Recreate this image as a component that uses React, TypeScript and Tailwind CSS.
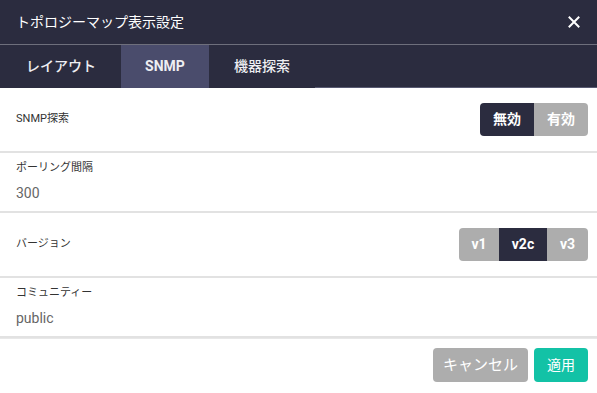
import { useState } from 'react';

const font = "font-['Roboto','Noto_Sans_CJK_JP',sans-serif]";

function Segmented({ items, value, onChange, widths }: { items: string[]; value: string; onChange: (v: string) => void; widths: string[] }) {
  return (
    <div className="flex h-[33px] overflow-hidden rounded-[4px]">
      {items.map((it, i) => (
        <button
          key={it}
          onClick={() => onChange(it)}
          className={`${widths[i]} flex items-center justify-center text-[14px] font-bold text-white ${
            value === it ? 'bg-[#2b2c3f]' : 'bg-[#adadad]'
          }`}
        >
          {it}
        </button>
      ))}
    </div>
  );
}

export default function App() {
  const [enabled, setEnabled] = useState('無効');
  const [version, setVersion] = useState('v2c');
  const tabs = ['レイアウト', 'SNMP', '機器探索'];

  return (
    <div className={`${font} flex h-[393px] w-[597px] flex-col bg-white`}>
      <div className="flex h-[44px] items-center justify-between bg-[#2b2c3f] pl-4 pr-[17px]">
        <span className="text-[14px] text-white">トポロジーマップ表示設定</span>
        <svg width="12" height="12" viewBox="0 0 12 12" className="text-white">
          <path d="M1.5 1.5 10.5 10.5M10.5 1.5 1.5 10.5" stroke="currentColor" strokeWidth="2" strokeLinecap="square" />
        </svg>
      </div>
      <div className="h-px bg-[#6e6f7c]" />
      <div className="flex h-[43px] bg-[#2b2c3f]">
        {tabs.map((t) => (
          <div
            key={t}
            className={`flex items-center px-[25px] text-[14px] text-[#eeeef2] ${
              t === 'SNMP' ? 'w-[88px] justify-center bg-[#4a4c6c] px-0 font-bold' : 'font-medium'
            } ${t === 'レイアウト' ? 'pl-[26px]' : ''}`}
          >
            {t}
          </div>
        ))}
        <div className="flex-1 border-b border-[#585a72]" />
      </div>

      <div className="flex h-[65px] items-center justify-between border-b-2 border-[#e2e2e2] pl-4 pr-[9px]">
        <span className="text-[11px] text-[#333]">SNMP探索</span>
        <Segmented items={['無効', '有効']} value={enabled} onChange={setEnabled} widths={['w-[54px]', 'w-[54px]']} />
      </div>

      <div className="flex h-[60px] flex-col border-b-2 border-[#e2e2e2] pl-4 pt-[8px]">
        <span className="text-[11px] leading-[14px] text-[#333]">ポーリング間隔</span>
        <span className="mt-[9px] text-[14px] leading-[18px] text-[#666]">300</span>
      </div>

      <div className="flex h-[65px] items-center justify-between border-b-2 border-[#e2e2e2] pl-4 pr-[9px]">
        <span className="text-[11px] text-[#333]">バージョン</span>
        <Segmented items={['v1', 'v2c', 'v3']} value={version} onChange={setVersion} widths={['w-[40px]', 'w-[48px]', 'w-[41px]']} />
      </div>

      <div className="flex h-[60px] flex-col border-b-2 border-[#e2e2e2] pl-4 pt-[8px]">
        <span className="text-[11px] leading-[14px] text-[#333]">コミュニティー</span>
        <span className="mt-[9px] text-[14px] leading-[18px] text-[#666]">public</span>
      </div>

      <div className="flex flex-1 justify-end gap-[6px] border-t border-[#e8e8e8] pr-[9px] pt-[9px]">
        <button className="h-[34px] w-[95px] rounded-[4px] bg-[#adadad] text-[15px] text-white">キャンセル</button>
        <button className="h-[34px] w-[54px] rounded-[4px] bg-[#13c2a6] text-[14px] text-white">適用</button>
      </div>
    </div>
  );
}
